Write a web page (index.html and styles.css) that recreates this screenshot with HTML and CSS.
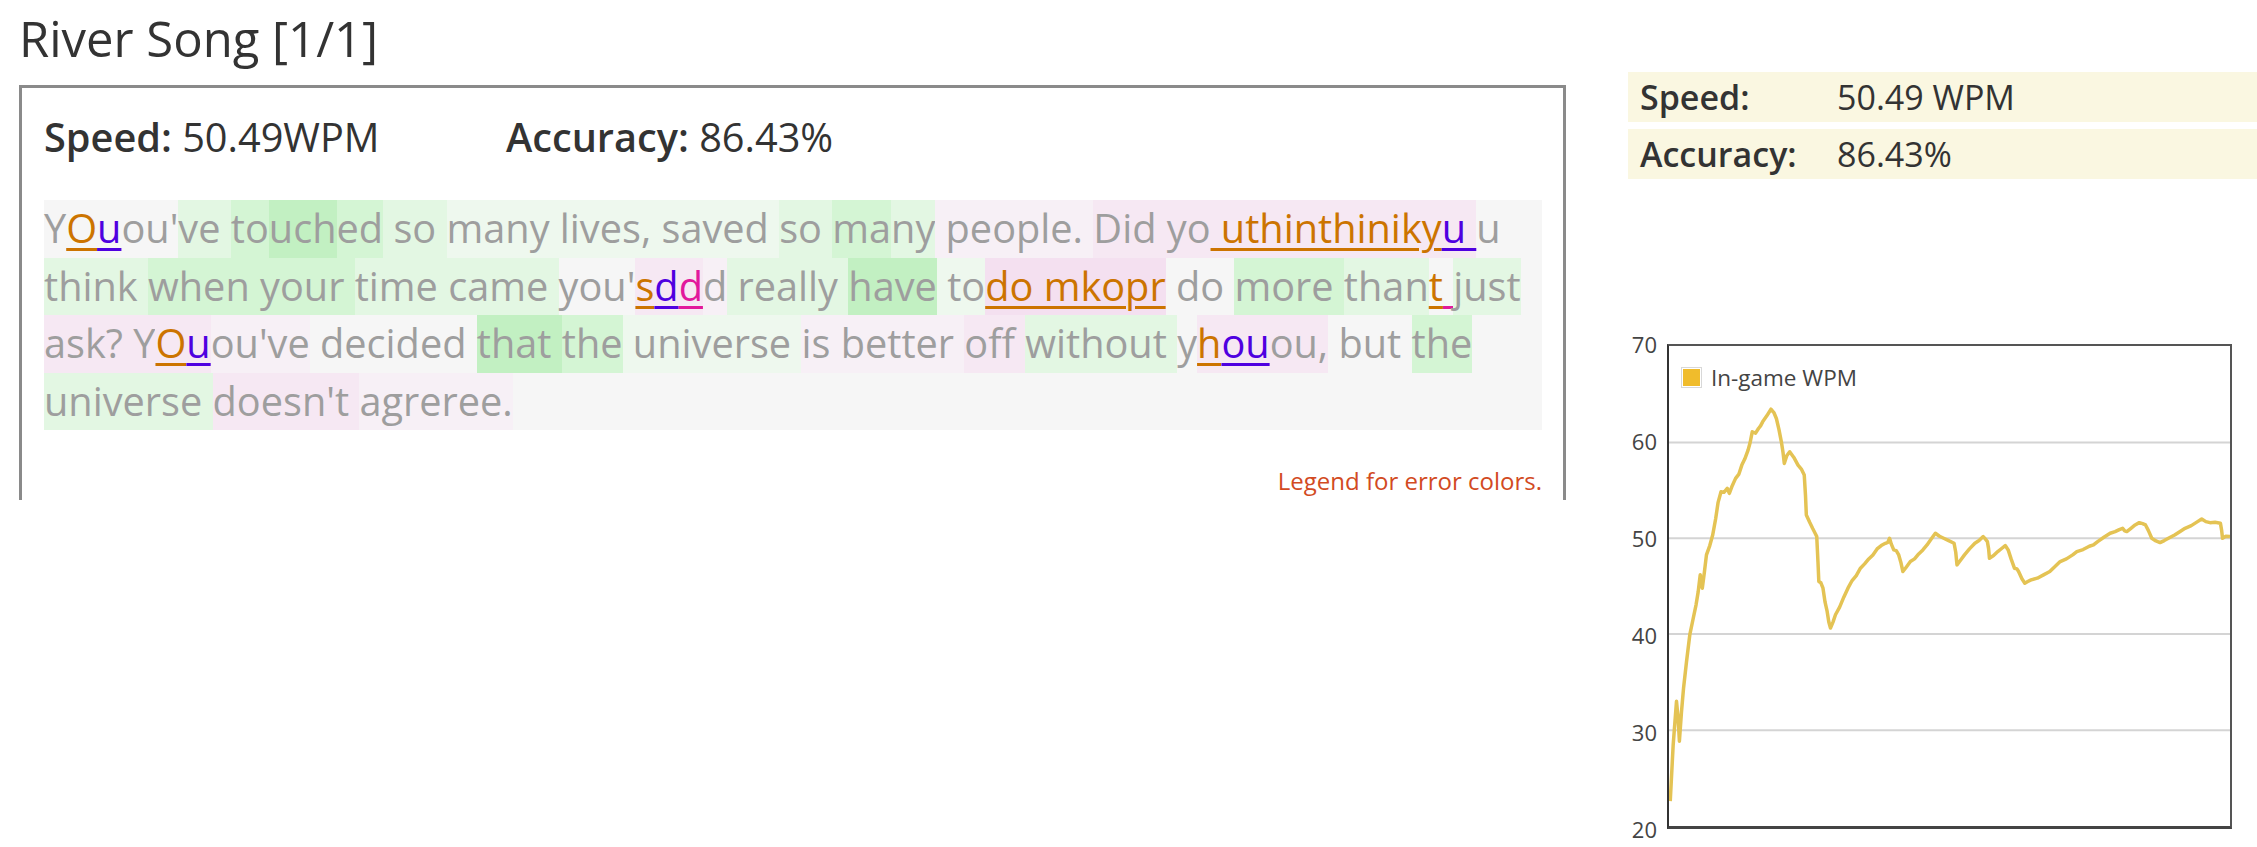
FILE: index.html
```html
<!DOCTYPE html>
<html>
<head>
<meta charset="utf-8">
<title>River Song [1/1]</title>
<link rel="stylesheet" href="styles.css">
</head>
<body>
<div class="page">
  <main class="main-col">
    <h1 class="title">River Song [1/1]</h1>
    <section class="result-box">
      <div class="stats">
        <div class="stat"><b>Speed:</b> 50.49WPM</div>
        <div class="stat"><b>Accuracy:</b> 86.43%</div>
      </div>
      <div class="typed">
        <div class="line"><span>Y</span><span class="eo">O</span><span class="eb">u</span><span>ou'</span><span class="g1">ve </span><span class="g2">to</span><span class="g3">uch</span><span class="g2">ed</span><span class="g1"> so </span><span class="g0">many </span><span class="g0">lives, saved </span><span class="g1">so </span><span class="g2">ma</span><span class="g1">ny</span><span class="p0"> people. </span><span class="p1">Did yo</span><span class="p1 eo"> uthinthiniky</span><span class="p1 eb">u </span><span>u</span></div>
        <div class="line"><span class="g1">think </span><span class="g2">when </span><span class="g2">your </span><span class="g1">time came </span><span>you'</span><span class="p1 eo">s</span><span class="p1 eb">d</span><span class="p1 em">d</span><span class="p0">d</span><span class="g1"> really </span><span class="g3">have</span><span class="g0"> to</span><span class="p2 eo">do mkopr</span><span> do </span><span class="g2">more </span><span class="g1">than</span><span class="eo">t</span><span class="em"> </span><span class="g1">just</span></div>
        <div class="line"><span class="p1">ask? Y</span><span class="p1 eo">O</span><span class="p1 eb">u</span><span class="p0">ou've</span><span> decided </span><span class="g3">that </span><span class="g2">the</span><span class="g0"> universe </span><span class="p0">is better </span><span class="p1">off </span><span class="g1">without </span><span>y</span><span class="p1 eo">h</span><span class="p1 eb">ou</span><span class="p1">ou,</span><span> but </span><span class="g2">the</span></div>
        <div class="line"><span class="g1">universe </span><span class="p1">doesn't </span><span class="p0">agreree.</span></div>
      </div>
      <div class="legend-link"><a href="#">Legend for error colors.</a></div>
    </section>
  </main>
  <aside class="side-col">
    <div class="summary">
      <div class="summary-row"><span class="summary-label">Speed:</span><span>50.49 WPM</span></div>
      <div class="summary-row"><span class="summary-label">Accuracy:</span><span>86.43%</span></div>
    </div>
    <div class="chart">
      <div class="y-axis">
        <span>70</span><span>60</span><span>50</span><span>40</span><span>30</span><span>20</span>
      </div>
      <div class="plot">
        <svg class="plot-svg" viewBox="0 0 1348 1443" preserveAspectRatio="none">
          <g class="grid">
            <line x1="0" y1="290" x2="1348" y2="290"/>
            <line x1="0" y1="578" x2="1348" y2="578"/>
            <line x1="0" y1="866" x2="1348" y2="866"/>
            <line x1="0" y1="1155" x2="1348" y2="1155"/>
          </g>
          <polyline class="wpm-line" points="3,1368 10,1200 18,1068 22,1120 25,1188 30,1100 35,1028 42,950 50,868 58,820 65,778 70,740 75,688 80,728 85,680 90,628 98,600 105,568 112,520 118,470 125,438 132,440 140,428 145,443 152,420 160,398 168,385 175,358 182,340 190,313 195,290 200,258 208,262 215,248 220,240 225,228 235,210 245,190 252,200 258,218 264,250 270,288 274,320 277,353 283,330 290,318 300,335 310,358 318,370 325,388 328,450 330,508 338,530 345,548 352,565 355,573 358,650 360,708 365,712 370,728 375,770 380,798 384,830 388,848 394,830 400,808 410,785 420,755 430,728 440,705 450,690 460,668 470,655 480,640 490,628 500,610 510,600 520,593 526,590 530,578 534,595 540,613 546,615 552,628 557,650 562,678 570,665 580,648 590,640 600,625 610,613 620,598 630,580 640,563 650,572 660,578 672,585 685,593 689,620 692,658 700,645 710,628 722,610 735,593 745,585 755,573 760,580 765,588 768,610 770,638 780,630 790,618 800,608 808,600 815,613 822,640 830,668 836,670 840,678 848,700 855,713 862,708 870,703 885,698 900,688 915,678 930,660 940,648 955,640 970,628 980,618 995,612 1010,602 1020,598 1030,588 1045,575 1060,563 1072,558 1082,552 1090,548 1095,556 1100,558 1110,548 1120,538 1130,531 1138,534 1145,538 1152,555 1160,578 1170,586 1180,591 1190,585 1200,578 1215,568 1230,556 1240,548 1255,540 1270,528 1280,520 1290,528 1300,531 1312,530 1325,533 1328,555 1330,578 1338,572 1348,573"/>
        </svg>
        <div class="chart-legend"><span class="legend-swatch"></span><span>In-game WPM</span></div>
      </div>
    </div>
  </aside>
</div>
</body>
</html>
```

FILE: styles.css
```css
html, body {
  margin: 0;
  padding: 0;
  background: #ffffff;
}

body {
  font-family: "Open Sans", "Noto Sans", sans-serif;
  color: #333333;
  overflow: hidden;
}

.page {
  display: flex;
  align-items: flex-start;
  gap: 62px;
  padding-left: 19px;
}

.main-col {
  flex: none;
  width: 1547px;
}

.title {
  margin: 4px 0 13px;
  font-size: 49px;
  font-weight: 400;
  line-height: 68px;
  color: #333333;
}

.result-box {
  border: 3px solid #8a8a8a;
  border-bottom: none;
  padding: 22px 21px 3px 22px;
}

.stats {
  display: grid;
  grid-template-columns: 462px auto;
  font-size: 39.7px;
  line-height: 54px;
  color: #333333;
}

.stat b {
  font-weight: 600;
}

.typed {
  margin-top: 36px;
  background: #f6f6f6;
  color: #9e9e9e;
  font-size: 39.7px;
  line-height: 57.5px;
}

.line {
  height: 57.5px;
  white-space: pre;
}

.line span {
  display: inline-block;
  height: 57.5px;
  vertical-align: top;
}

.g0 { background: #eef8ee; }
.g1 { background: #e3f7e3; }
.g2 { background: #d4f5d4; }
.g3 { background: #c2f0c2; }
.p0 { background: #f7f0f6; }
.p1 { background: #f6e8f3; }
.p2 { background: #f4e0f0; }

.eo, .eb, .em {
  text-decoration-line: underline;
  text-decoration-thickness: 3px;
  text-underline-offset: 5px;
}

.eo { color: #cc7400; text-decoration-color: #cc7400; }
.eb { color: #4f00e0; text-decoration-color: #4f00e0; }
.em { color: #e2189c; text-decoration-color: #e2189c; }

.legend-link {
  margin-top: 34px;
  text-align: right;
  font-size: 24px;
}

.legend-link a {
  color: #d24a22;
  text-decoration: none;
}

.side-col {
  flex: 1;
  min-width: 0;
}

.summary {
  margin-top: 72px;
  display: flex;
  flex-direction: column;
  gap: 7px;
}

.summary-row {
  display: flex;
  align-items: center;
  height: 50px;
  padding-left: 12px;
  background: #faf7e1;
  font-size: 34px;
  color: #333333;
}

.summary-label {
  width: 197px;
  font-weight: 600;
}

.chart {
  display: flex;
  margin-top: 165px;
}

.y-axis {
  flex: none;
  width: 29px;
  padding-right: 10px;
  height: 509px;
  margin-top: -12px;
  display: flex;
  flex-direction: column;
  justify-content: space-between;
  align-items: flex-end;
  font-size: 22px;
  line-height: 24px;
  color: #444444;
}

.plot {
  position: relative;
  flex: none;
  box-sizing: border-box;
  width: 565px;
  height: 485px;
  border: 2px solid #555555;
  border-left-color: #333333;
  border-bottom: 3px solid #444444;
}

.plot-svg {
  position: absolute;
  inset: 0;
  width: 100%;
  height: 100%;
}

.grid line {
  stroke: #d4d4d4;
  stroke-width: 2;
  vector-effect: non-scaling-stroke;
}

.wpm-line {
  fill: none;
  stroke: #e4c354;
  stroke-width: 3.5;
  stroke-linejoin: round;
  vector-effect: non-scaling-stroke;
}

.chart-legend {
  position: absolute;
  top: 16px;
  left: 12px;
  display: flex;
  align-items: center;
  gap: 9px;
  font-size: 22.5px;
  color: #444444;
}

.legend-swatch {
  width: 19px;
  height: 19px;
  background: #f0bc2c;
  border: 1px solid #d8d8d8;
  box-shadow: inset 0 0 0 1px #ffffff;
}
```
